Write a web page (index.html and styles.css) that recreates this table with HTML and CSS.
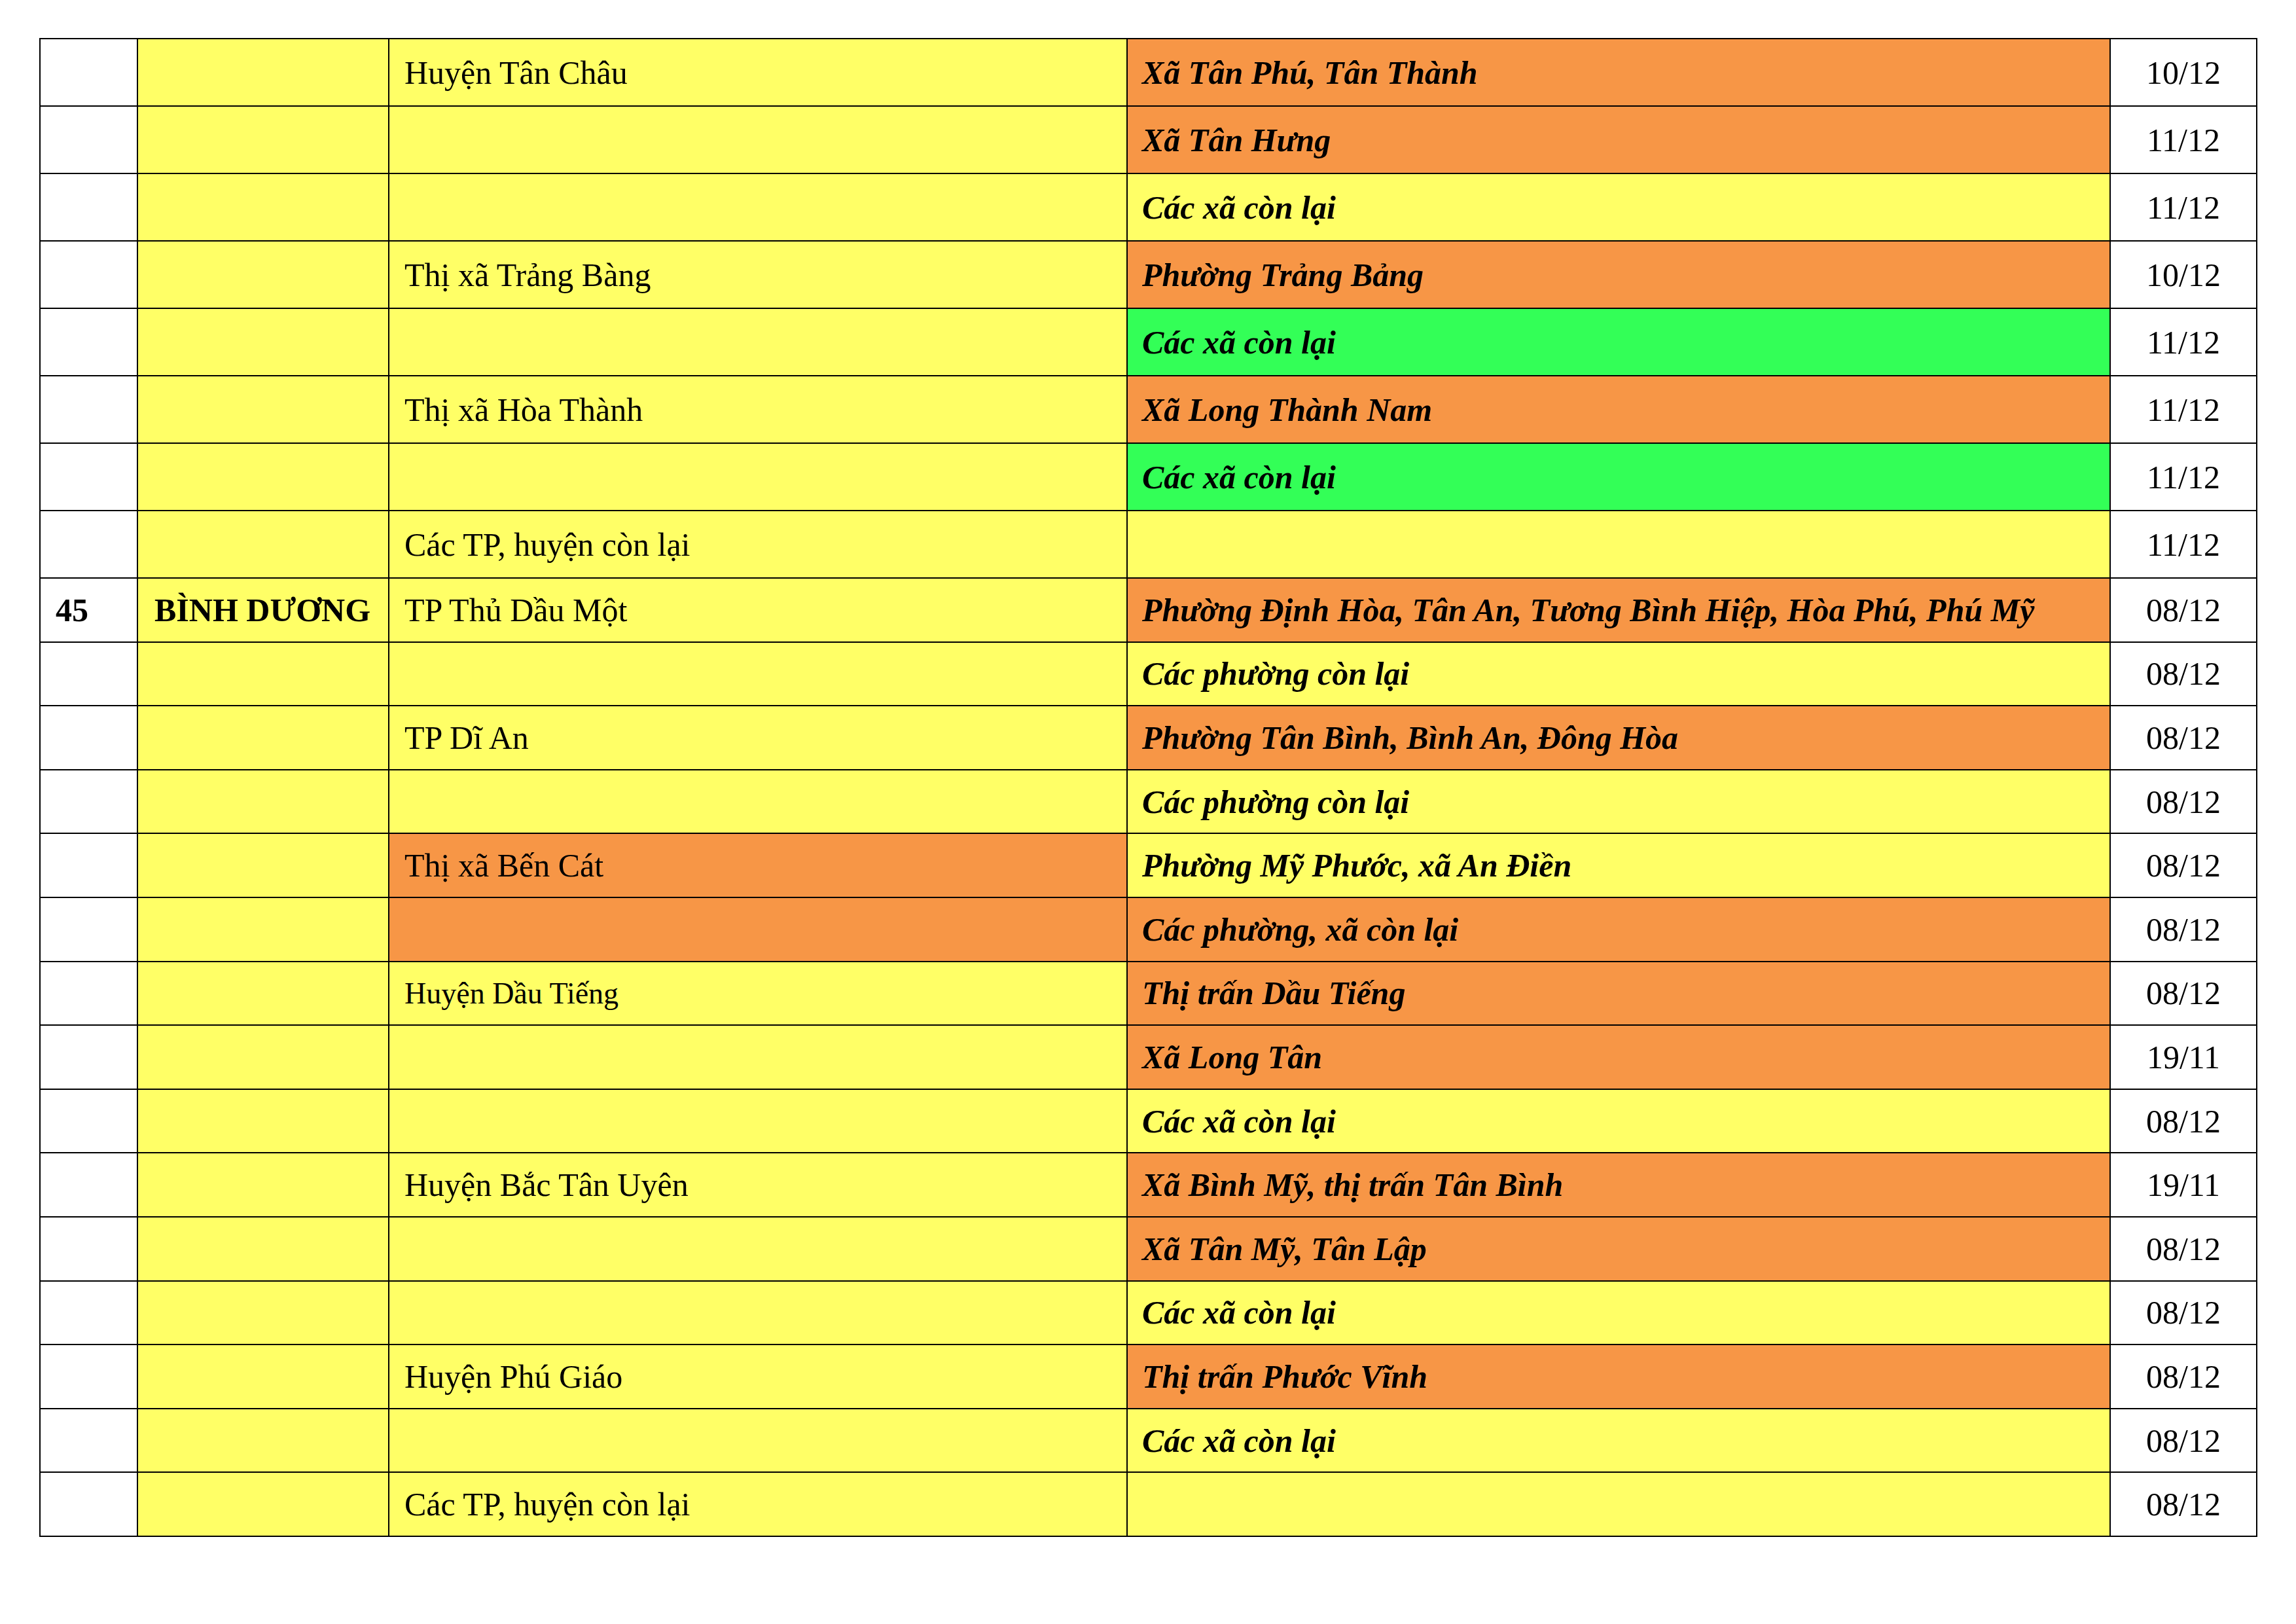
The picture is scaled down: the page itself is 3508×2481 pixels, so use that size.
FILE: index.html
```html
<!DOCTYPE html>
<html lang="vi">
<head>
<meta charset="utf-8">
<title>Bảng</title>
<link rel="stylesheet" href="styles.css">
</head>
<body>
<div class="sheet">
  <div class="c n"></div><div class="c p y"></div><div class="c d y">Huyện Tân Châu</div><div class="c w o">Xã Tân Phú, Tân Thành</div><div class="c t">10/12</div>
  <div class="c n"></div><div class="c p y"></div><div class="c d y"></div><div class="c w o">Xã Tân Hưng</div><div class="c t">11/12</div>
  <div class="c n"></div><div class="c p y"></div><div class="c d y"></div><div class="c w y">Các xã còn lại</div><div class="c t">11/12</div>
  <div class="c n"></div><div class="c p y"></div><div class="c d y">Thị xã Trảng Bàng</div><div class="c w o">Phường Trảng Bảng</div><div class="c t">10/12</div>
  <div class="c n"></div><div class="c p y"></div><div class="c d y"></div><div class="c w g">Các xã còn lại</div><div class="c t">11/12</div>
  <div class="c n"></div><div class="c p y"></div><div class="c d y">Thị xã Hòa Thành</div><div class="c w o">Xã Long Thành Nam</div><div class="c t">11/12</div>
  <div class="c n"></div><div class="c p y"></div><div class="c d y"></div><div class="c w g">Các xã còn lại</div><div class="c t">11/12</div>
  <div class="c n"></div><div class="c p y"></div><div class="c d y">Các TP, huyện còn lại</div><div class="c w y"></div><div class="c t">11/12</div>
  <div class="c n b">45</div><div class="c p y b">BÌNH DƯƠNG</div><div class="c d y">TP Thủ Dầu Một</div><div class="c w o">Phường Định Hòa, Tân An, Tương Bình Hiệp, Hòa Phú, Phú Mỹ</div><div class="c t">08/12</div>
  <div class="c n"></div><div class="c p y"></div><div class="c d y"></div><div class="c w y">Các phường còn lại</div><div class="c t">08/12</div>
  <div class="c n"></div><div class="c p y"></div><div class="c d y">TP Dĩ An</div><div class="c w o">Phường Tân Bình, Bình An, Đông Hòa</div><div class="c t">08/12</div>
  <div class="c n"></div><div class="c p y"></div><div class="c d y"></div><div class="c w y">Các phường còn lại</div><div class="c t">08/12</div>
  <div class="c n"></div><div class="c p y"></div><div class="c d o">Thị xã Bến Cát</div><div class="c w y">Phường Mỹ Phước, xã An Điền</div><div class="c t">08/12</div>
  <div class="c n"></div><div class="c p y"></div><div class="c d o"></div><div class="c w o">Các phường, xã còn lại</div><div class="c t">08/12</div>
  <div class="c n"></div><div class="c p y"></div><div class="c d y sm">Huyện Dầu Tiếng</div><div class="c w o">Thị trấn Dầu Tiếng</div><div class="c t">08/12</div>
  <div class="c n"></div><div class="c p y"></div><div class="c d y"></div><div class="c w o">Xã Long Tân</div><div class="c t">19/11</div>
  <div class="c n"></div><div class="c p y"></div><div class="c d y"></div><div class="c w y">Các xã còn lại</div><div class="c t">08/12</div>
  <div class="c n"></div><div class="c p y"></div><div class="c d y">Huyện Bắc Tân Uyên</div><div class="c w o">Xã Bình Mỹ, thị trấn Tân Bình</div><div class="c t">19/11</div>
  <div class="c n"></div><div class="c p y"></div><div class="c d y"></div><div class="c w o">Xã Tân Mỹ, Tân Lập</div><div class="c t">08/12</div>
  <div class="c n"></div><div class="c p y"></div><div class="c d y"></div><div class="c w y">Các xã còn lại</div><div class="c t">08/12</div>
  <div class="c n"></div><div class="c p y"></div><div class="c d y">Huyện Phú Giáo</div><div class="c w o">Thị trấn Phước Vĩnh</div><div class="c t">08/12</div>
  <div class="c n"></div><div class="c p y"></div><div class="c d y"></div><div class="c w y">Các xã còn lại</div><div class="c t">08/12</div>
  <div class="c n"></div><div class="c p y"></div><div class="c d y">Các TP, huyện còn lại</div><div class="c w y"></div><div class="c t">08/12</div>
</div>
</body>
</html>
```

FILE: styles.css
```css
html, body {
  margin: 0;
  padding: 0;
  background: #ffffff;
}

body {
  padding: 58px 0 0 60px;
  font-family: "Liberation Serif", "Times New Roman", serif;
  font-size: 50px;
  color: #000000;
}

.sheet {
  display: grid;
  width: 3389px;
  box-sizing: border-box;
  grid-template-columns: 147px 382px 1126px 1500px 222px;
  grid-template-rows: repeat(8, 101px) repeat(15, 95.6px);
  gap: 2px;
  padding: 2px;
  background: #000000;
}

.c {
  display: flex;
  align-items: center;
  background: #ffffff;
  white-space: nowrap;
  overflow: hidden;
  line-height: normal;
}

.n { padding-left: 23px; }
.p { padding-left: 25px; }
.d { padding-left: 23px; }
.w { padding-left: 22px; font-weight: bold; font-style: italic; }
.t { justify-content: center; }

.b { font-weight: bold; }
.sm { font-size: 46px; }

.y { background: #ffff66; }
.o { background: #f79646; }
.g { background: #33ff57; }
```
